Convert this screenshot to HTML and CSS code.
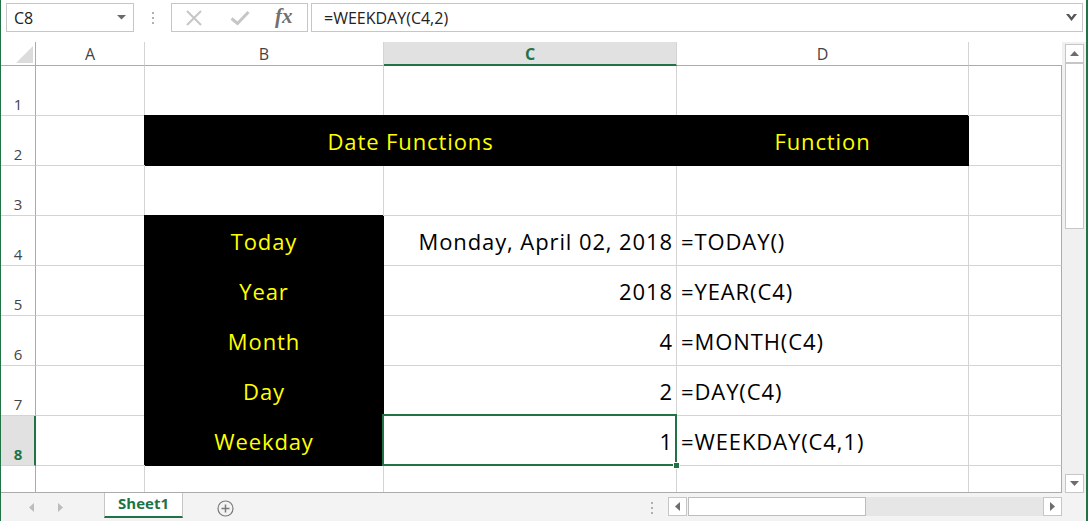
FILE: index.html
```html
<!DOCTYPE html>
<html>
<head>
<meta charset="utf-8">
<link rel="stylesheet" href="styles.css">
</head>
<body>
<div class="app">
  <div class="fbar">
    <div class="namebox"><span>C8</span><svg class="nb-arrow" width="9" height="5" viewBox="0 0 9 5"><path d="M0 0h9L4.5 4.5z" fill="#6a6a6a"/></svg></div>
    <div class="grip"><i></i><i></i><i></i></div>
    <div class="fxbox">
      <svg class="ic-x" width="18" height="18" viewBox="0 0 18 18"><path d="M2 2L16 16M16 2L2 16" stroke="#c6c6c6" stroke-width="2" fill="none"/></svg>
      <svg class="ic-ok" width="20" height="16" viewBox="0 0 20 16"><path d="M1.5 8.5L7.5 13.5L18.5 2" stroke="#c6c6c6" stroke-width="3" fill="none"/></svg>
      <span class="fx">fx</span>
    </div>
    <div class="formula"><span>=WEEKDAY(C4,2)</span><svg class="chev" width="11" height="8" viewBox="0 0 11 8"><path d="M0 0h3l2.5 3.2L8 0h3L5.5 7z" fill="#555"/></svg></div>
  </div>
  <div class="main">
    <div class="left">
      <div class="sheet">
        <div class="c corner"><svg width="17" height="17" viewBox="0 0 17 17"><path d="M17 0V17H0z" fill="#dcdcdc"/></svg></div>
        <div class="c ch">A</div>
        <div class="c ch">B</div>
        <div class="c ch chsel">C</div>
        <div class="c ch">D</div>
        <div class="c ch chlast"></div>

        <div class="c rh">1</div><div class="c"></div><div class="c"></div><div class="c"></div><div class="c"></div><div class="c edge"></div>

        <div class="c rh">2</div><div class="c"></div>
        <div class="c d blk ctr span2">Date Functions</div>
        <div class="c d blk ctr">Function</div><div class="c edge"></div>

        <div class="c rh">3</div><div class="c"></div><div class="c"></div><div class="c"></div><div class="c"></div><div class="c edge"></div>

        <div class="c rh">4</div><div class="c"></div>
        <div class="c d blk ctr">Today</div>
        <div class="c d r">Monday, April 02, 2018</div>
        <div class="c d l">=TODAY()</div><div class="c edge"></div>

        <div class="c rh">5</div><div class="c"></div>
        <div class="c d blk ctr">Year</div>
        <div class="c d r">2018</div>
        <div class="c d l">=YEAR(C4)</div><div class="c edge"></div>

        <div class="c rh">6</div><div class="c"></div>
        <div class="c d blk ctr">Month</div>
        <div class="c d r">4</div>
        <div class="c d l">=MONTH(C4)</div><div class="c edge"></div>

        <div class="c rh">7</div><div class="c"></div>
        <div class="c d blk ctr">Day</div>
        <div class="c d r">2</div>
        <div class="c d l">=DAY(C4)</div><div class="c edge"></div>

        <div class="c rh rhsel">8</div><div class="c"></div>
        <div class="c d blk ctr">Weekday</div>
        <div class="c d r active">1<div class="selbox"><span class="handle"></span></div></div>
        <div class="c d l">=WEEKDAY(C4,1)</div><div class="c edge"></div>

        <div class="c rh last"></div><div class="c last"></div><div class="c last"></div><div class="c last"></div><div class="c last"></div><div class="c edge last"></div>
      </div>
      <div class="tabbar">
        <div class="tabnav">
          <svg width="5" height="9" viewBox="0 0 5 9"><path d="M5 0V9L0 4.5z" fill="#bcbcbc"/></svg>
          <svg width="5" height="9" viewBox="0 0 5 9"><path d="M0 0V9L5 4.5z" fill="#bcbcbc"/></svg>
        </div>
        <div class="tab">Sheet1</div>
        <div class="plus"><svg width="17" height="17" viewBox="0 0 17 17"><circle cx="8.5" cy="8.5" r="7.5" fill="none" stroke="#7a7a7a" stroke-width="1.2"/><path d="M8.5 4.5v8M4.5 8.5h8" stroke="#7a7a7a" stroke-width="1.5"/></svg></div>
        <div class="spacer"></div>
        <div class="hgrip"><i></i><i></i><i></i></div>
        <div class="hs">
          <div class="sbtn"><svg width="5" height="9" viewBox="0 0 5 9"><path d="M5 0V9L0 4.5z" fill="#6d6d6d"/></svg></div>
          <div class="hthumb"></div>
          <div class="htrack"></div>
          <div class="sbtn"><svg width="5" height="9" viewBox="0 0 5 9"><path d="M0 0V9L5 4.5z" fill="#6d6d6d"/></svg></div>
        </div>
      </div>
    </div>
    <div class="vs">
      <div class="vtrack">
        <div class="sbtn"><svg width="9" height="5" viewBox="0 0 9 5"><path d="M0 5h9L4.5 0z" fill="#6d6d6d"/></svg></div>
        <div class="vthumb"></div>
        <div class="vfill"></div>
        <div class="sbtn"><svg width="9" height="5" viewBox="0 0 9 5"><path d="M0 0h9L4.5 5z" fill="#6d6d6d"/></svg></div>
      </div>
    </div>
  </div>
</div>
</body>
</html>
```
FILE: styles.css
```css
* { box-sizing: border-box; }
html, body { margin: 0; padding: 0; }
body {
  width: 1088px;
  height: 521px;
  overflow: hidden;
  background: #fff;
  font-family: "Open Sans", "Liberation Sans", sans-serif;
  color: #222;
}
.app {
  width: 1088px;
  height: 521px;
  border-left: 1px solid #217346;
  border-right: 2px solid #217346;
  display: flex;
  flex-direction: column;
}
/* formula bar */
.fbar {
  height: 42px;
  flex: none;
  display: flex;
  align-items: flex-start;
  padding-top: 3px;
}
.namebox {
  margin-left: 5px;
  width: 128px;
  height: 29px;
  border: 1px solid #c6c6c6;
  display: flex;
  align-items: center;
  justify-content: space-between;
  padding: 0 7px 0 7px;
  font-size: 16px;
  color: #222;
}
.nb-arrow { margin-bottom: 1px; }
.grip {
  width: 37px;
  height: 29px;
  display: flex;
  flex-direction: column;
  align-items: center;
  justify-content: center;
  gap: 3px;
}
.grip i, .hgrip i {
  display: block;
  width: 2px;
  height: 2px;
  background: #b0b0b0;
}
.fxbox {
  width: 137px;
  height: 29px;
  border: 1px solid #c6c6c6;
  display: flex;
  align-items: center;
  padding-left: 13px;
}
.ic-ok { margin-left: 27px; margin-top: 1px; }
.fx {
  margin-left: 25px;
  font-family: "Liberation Serif", serif;
  font-style: italic;
  font-weight: bold;
  font-size: 21px;
  color: #707070;
  line-height: 1;
  margin-top: -2px;
}
.formula {
  margin-left: 3px;
  width: 772px;
  height: 29px;
  border: 1px solid #c6c6c6;
  display: flex;
  align-items: center;
  justify-content: space-between;
  padding: 0 5px 0 12px;
  font-size: 16px;
  color: #222;
}
/* main area */
.main {
  display: flex;
  height: 479px;
}
.left {
  width: 1061px;
  display: flex;
  flex-direction: column;
}
.sheet {
  display: grid;
  grid-template-columns: 35px 109px 239px 293px 292px 93px;
  grid-template-rows: 24px repeat(8, 50px) 26px;
  height: 450px;
}
.c {
  border-right: 1px solid #d4d4d4;
  border-bottom: 1px solid #d4d4d4;
  min-width: 0;
  overflow: visible;
}
.corner {
  border-right-color: #ababab;
  border-bottom-color: #ababab;
  display: flex;
  align-items: flex-end;
  justify-content: flex-end;
  padding: 0 2px 2px 0;
}
.ch {
  border-bottom-color: #ababab;
  display: flex;
  align-items: center;
  justify-content: center;
  font-size: 16px;
  color: #444;
  padding-top: 1px;
}
.chsel {
  background: #e1e1e1;
  color: #217346;
  font-weight: bold;
  border-bottom: 2px solid #217346;
}
.chlast { border-right: 0; }
.rh {
  border-right-color: #ababab;
  display: flex;
  align-items: flex-end;
  justify-content: center;
  font-size: 15px;
  line-height: 20px;
  padding-bottom: 1px;
  color: #444;
}
.rhsel {
  background: #e1e1e1;
  border-right: 2px solid #217346;
  color: #217346;
  font-weight: bold;
  padding-left: 1px;
}
.edge { border-right-color: #ababab; }
.last { border-bottom: 0; }
.span2 { grid-column: span 2; }
.d {
  font-size: 22px;
  letter-spacing: 0.9px;
  line-height: 49px;
  padding-top: 1px;
  white-space: nowrap;
  color: #000;
}
.r { text-align: right; padding-right: 3px; }
.l { text-align: left; padding-left: 4px; }
.ctr { text-align: center; }
.blk {
  background: #000;
  color: #ffff00;
  border-color: #000;
  box-shadow: -1px -1px 0 #000;
  position: relative;
}
.active { position: relative; }
.selbox {
  position: absolute;
  top: -2px;
  left: -2px;
  right: -1px;
  bottom: -1px;
  border: 2px solid #217346;
  z-index: 2;
}
.handle {
  position: absolute;
  right: -5px;
  bottom: -5px;
  width: 7px;
  height: 7px;
  background: #217346;
  border: 1px solid #fff;
}
/* tab bar */
.tabbar {
  height: 29px;
  border-top: 1px solid #ababab;
  background: #f3f3f3;
  display: flex;
}
.tabnav {
  width: 103px;
  display: flex;
  align-items: center;
  padding-left: 28px;
  gap: 24px;
  padding-top: 1px;
}
.tab {
  width: 79px;
  height: 25px;
  background: #fff;
  border-left: 1px solid #c6c6c6;
  border-right: 1px solid #c6c6c6;
  border-bottom: 2px solid #217346;
  display: flex;
  align-items: center;
  justify-content: center;
  font-size: 15px;
  font-weight: bold;
  color: #217346;
  padding-bottom: 3px;
}
.plus {
  margin-left: 34px;
  display: flex;
  align-items: center;
  padding-top: 2px;
}
.spacer { flex: 1; }
.hgrip {
  display: flex;
  flex-direction: column;
  justify-content: center;
  gap: 3px;
  margin-right: 15px;
  padding-top: 2px;
}
.hs {
  width: 394px;
  height: 19px;
  margin-top: 4px;
  display: flex;
}
.sbtn {
  width: 19px;
  height: 19px;
  flex: none;
  background: #fff;
  border: 1px solid #c6c6c6;
  display: flex;
  align-items: center;
  justify-content: center;
}
.hthumb {
  width: 178px;
  background: #fff;
  border: 1px solid #bdbdbd;
  margin-left: 1px;
}
.htrack {
  flex: 1;
  background: #e6e6e6;
}
/* vertical scrollbar */
.vs {
  width: 24px;
  background: #f3f3f3;
}
.vtrack {
  height: 451px;
  background: #f0f0f0;
  display: flex;
  flex-direction: column;
  padding: 2px 2px 0 3px;
}
.vthumb {
  height: 166px;
  background: #fff;
  border: 1px solid #c6c6c6;
}
.vfill { flex: 1; }
```
